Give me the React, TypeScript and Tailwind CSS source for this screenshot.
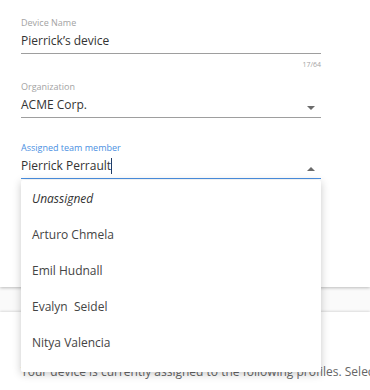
import React from 'react';

const members = ['Arturo Chmela', 'Emil Hudnall', 'Evalyn\u00a0 Seidel', 'Nitya Valencia'];

const Caret: React.FC<{ up?: boolean }> = ({ up }) => (
  <svg width="8" height="4" viewBox="0 0 8 4" className="absolute right-[6px] bottom-[7px]">
    <path d={up ? 'M0 4 L4 0 L8 4 Z' : 'M0 0 L8 0 L4 4 Z'} fill="#6b6b6b" />
  </svg>
);

const App: React.FC = () => {
  return (
    <div className="w-[370px] h-[390px] overflow-hidden bg-[#fafafa] relative" style={{ fontFamily: '"Open Sans", sans-serif' }}>
      <div className="bg-white h-[287px] shadow-[0_1px_3px_rgba(0,0,0,0.25)] px-[21px] pt-[17px]">
        <div className="w-[300px]">
          <div className="text-[9px] text-[#a3a3a3] leading-[12px]">Device Name</div>
          <div className="relative border-b border-[#9e9e9e] h-[25px] flex items-center">
            <span className="text-[12px] text-[#333]">Pierrick’s device</span>
          </div>
          <div className="text-right text-[7px] text-[#a3a3a3] mt-[6px] leading-[9px]">17/64</div>

          <div className="text-[9px] text-[#a3a3a3] leading-[12px] mt-[12px]">Organization</div>
          <div className="relative border-b border-[#9e9e9e] h-[25px] flex items-center">
            <span className="text-[12px] text-[#333]">ACME Corp.</span>
            <Caret />
          </div>

          <div className="text-[9px] text-[#4a90e2] leading-[12px] mt-[24px]">Assigned team member</div>
          <div className="relative border-b border-[#4a90e2] h-[25px] flex items-center">
            <span className="text-[12px] text-[#333]">Pierrick Perrault</span>
            <span className="w-px h-[16px] bg-[#1f3c66]"></span>
            <Caret up />
          </div>
        </div>
      </div>

      <div className="bg-white mt-[25px] h-[100px] shadow-[0_-1px_2px_rgba(0,0,0,0.12)] px-[21px] pt-[51px]">
        <p className="text-[12px] text-[#666] whitespace-nowrap">
          Your device is currently assigned to the following profiles. Select the profiles
        </p>
      </div>

      <div className="absolute left-[21px] top-[180px] w-[300px] bg-white rounded-[2px] shadow-[0_2px_8px_rgba(0,0,0,0.22)] pt-[1px] pb-[11px]">
        <div className="h-[36px] flex items-center px-[11px] text-[12px] italic text-[#333]">Unassigned</div>
        {members.map(m => (
          <div key={m} className="h-[36px] flex items-center px-[11px] text-[12px] text-[#444]">{m}</div>
        ))}
      </div>
    </div>
  );
};

export default App;
